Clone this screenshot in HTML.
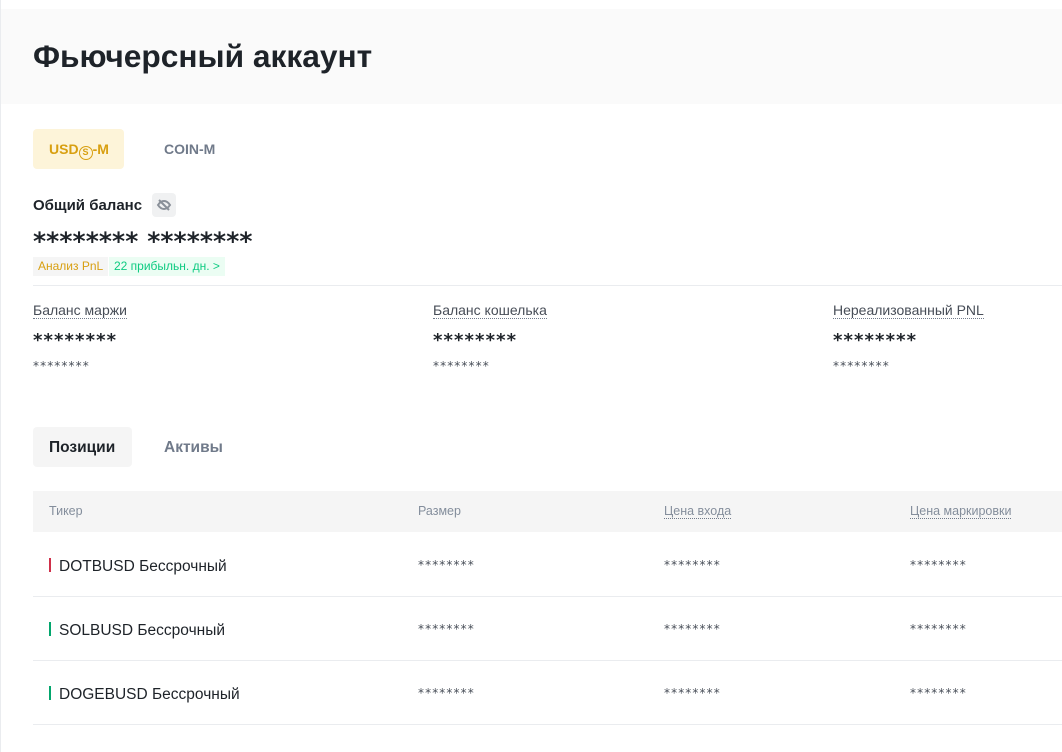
<!DOCTYPE html>
<html><head><meta charset="utf-8"><style>
*{margin:0;padding:0;box-sizing:border-box}
body{width:1062px;height:752px;overflow:hidden;background:#fff;font-family:"Liberation Sans",sans-serif;color:#1e2329;position:relative}
.a{position:absolute;white-space:nowrap}
.lb{position:absolute;left:0;top:0;width:1px;height:752px;background:#eaecef}
.hdr{position:absolute;left:1px;top:9px;width:1061px;height:95px;background:#fafafa}
.dot{border-bottom:1px dotted #707a8a}
.s{font-family:"DejaVu Sans",sans-serif;font-size:12px;color:#474d57;letter-spacing:1.1px}
.m{font-family:"DejaVu Sans",sans-serif;font-size:18px;font-weight:bold;letter-spacing:1.1px}
.bar{display:inline-block;width:2px;height:14px;margin-right:8px;vertical-align:-1px}
.row{position:absolute;left:33px;width:1029px;height:64px;border-bottom:1px solid #eaecef}
.th{font-size:12.5px;color:#848e9c}
.lbl{font-size:14px;color:#474d57}
.r{font-size:15.5px}
</style></head><body>
<div class="lb"></div>
<div class="hdr"></div>
<div class="a" style="left:33px;top:38px;font-size:31.7px;font-weight:bold">Фьючерсный аккаунт</div>

<div class="a" style="left:33px;top:129px;width:91px;height:40px;background:#fdf4d9;border-radius:4px"></div>
<div class="a" style="left:49px;top:141px;font-size:14px;font-weight:bold;color:#d89f10">USD<span style="display:inline-block;width:14px;height:14px;border:1.5px solid #d89f10;border-radius:50%;font-size:9px;line-height:11px;text-align:center;vertical-align:-1px">S</span>-M</div>
<div class="a" style="left:164px;top:141px;font-size:14px;font-weight:bold;color:#707a8a">COIN-M</div>

<div class="a" style="left:33px;top:197px;font-size:15px;font-weight:bold">Общий баланс</div>
<div class="a" style="left:152px;top:193px;width:24px;height:24px;background:#f0f1f2;border-radius:4px">
<svg width="24" height="24" viewBox="0 0 24 24"><path d="M6 12c2-3 4-4 6-4s4 1 6 4c-2 3-4 4-6 4s-4-1-6-4z" fill="none" stroke="#8a9099" stroke-width="2"/><path d="M7 7l10 10" stroke="#8a9099" stroke-width="2"/></svg></div>
<div class="a" style="left:33px;top:227px;font-family:'DejaVu Sans',sans-serif;font-size:25px;font-weight:bold;letter-spacing:0.1px">******** ********</div>
<div class="a" style="left:33px;top:257px;height:19px;padding:0 5px;background:#f5f5f5;font-size:12px;line-height:19px;color:#d89f10">Анализ PnL</div>
<div class="a" style="left:109px;top:257px;height:19px;padding:0 5px;background:#ebfdf3;font-size:12px;line-height:19px;color:#0ecb81">22 прибыльн. дн. &gt;</div>

<div class="a" style="left:33px;top:285px;width:1029px;height:1px;background:#eaecef"></div>

<div class="a dot lbl" style="left:33px;top:302px">Баланс маржи</div>
<div class="a m" style="left:33px;top:330px">********</div>
<div class="a s" style="left:33px;top:359px">********</div>
<div class="a dot lbl" style="left:433px;top:302px">Баланс кошелька</div>
<div class="a m" style="left:433px;top:330px">********</div>
<div class="a s" style="left:433px;top:359px">********</div>
<div class="a dot lbl" style="left:833px;top:302px">Нереализованный PNL</div>
<div class="a m" style="left:833px;top:330px">********</div>
<div class="a s" style="left:833px;top:359px">********</div>

<div class="a" style="left:33px;top:427px;width:99px;height:40px;background:#f5f5f5;border-radius:4px"></div>
<div class="a" style="left:49px;top:439px;font-size:15.5px;font-weight:bold">Позиции</div>
<div class="a" style="left:164px;top:439px;font-size:15.5px;font-weight:bold;color:#707a8a">Активы</div>

<div class="a" style="left:33px;top:491px;width:1029px;height:41px;background:#f5f5f5"></div>
<div class="a th" style="left:49px;top:504px">Тикер</div>
<div class="a th" style="left:418px;top:504px">Размер</div>
<div class="a dot th" style="left:664px;top:504px">Цена входа</div>
<div class="a dot th" style="left:910px;top:504px">Цена маркировки</div>

<div class="row" style="top:533px"></div>
<div class="row" style="top:597px"></div>
<div class="row" style="top:661px"></div>

<div class="a r" style="left:49px;top:558px"><span class="bar" style="background:#cf304a"></span>DOTBUSD Бессрочный</div>
<div class="a r" style="left:49px;top:622px"><span class="bar" style="background:#03a66d"></span>SOLBUSD Бессрочный</div>
<div class="a r" style="left:49px;top:686px"><span class="bar" style="background:#03a66d"></span>DOGEBUSD Бессрочный</div>

<div class="a s" style="left:418px;top:558px">********</div>
<div class="a s" style="left:664px;top:558px">********</div>
<div class="a s" style="left:910px;top:558px">********</div>
<div class="a s" style="left:418px;top:622px">********</div>
<div class="a s" style="left:664px;top:622px">********</div>
<div class="a s" style="left:910px;top:622px">********</div>
<div class="a s" style="left:418px;top:686px">********</div>
<div class="a s" style="left:664px;top:686px">********</div>
<div class="a s" style="left:910px;top:686px">********</div>
</body></html>
